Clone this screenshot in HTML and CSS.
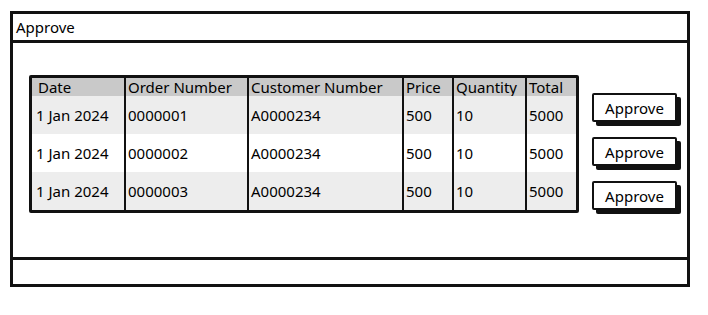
FILE: index.html
```html
<!DOCTYPE html>
<html lang="en">
<head>
    <meta charset="UTF-8">
    <title>Approve</title>
    <link rel="stylesheet" href="styles.css">
</head>
<body>
    <div class="window">
        <div class="title">Approve</div>
        <div class="main">
            <div class="grid">
                <div class="cell head first">Date</div>
                <div class="cell head">Order Number</div>
                <div class="cell head">Customer Number</div>
                <div class="cell head">Price</div>
                <div class="cell head">Quantity</div>
                <div class="cell head">Total</div>

                <div class="cell odd first">1 Jan 2024</div>
                <div class="cell odd">0000001</div>
                <div class="cell odd">A0000234</div>
                <div class="cell odd">500</div>
                <div class="cell odd">10</div>
                <div class="cell odd">5000</div>

                <div class="cell first">1 Jan 2024</div>
                <div class="cell">0000002</div>
                <div class="cell">A0000234</div>
                <div class="cell">500</div>
                <div class="cell">10</div>
                <div class="cell">5000</div>

                <div class="cell odd first">1 Jan 2024</div>
                <div class="cell odd">0000003</div>
                <div class="cell odd">A0000234</div>
                <div class="cell odd">500</div>
                <div class="cell odd">10</div>
                <div class="cell odd">5000</div>
            </div>
            <div class="buttons">
                <button class="btn">Approve</button>
                <button class="btn">Approve</button>
                <button class="btn">Approve</button>
            </div>
        </div>
        <div class="footer"></div>
    </div>
</body>
</html>
```

FILE: styles.css
```css
body{
    margin: 0;
    padding: 0;
    background: #fff;
    font-family: "Noto Sans", "Liberation Sans", sans-serif;
    font-size: 15px;
    color: #000;
}
.window{
    box-sizing: border-box;
    width: 680px;
    height: 276px;
    margin: 11px 0 0 10px;
    border: 3px solid #111;
    display: flex;
    flex-direction: column;
}
.title{
    height: 26px;
    line-height: 26px;
    padding-left: 3px;
    border-bottom: 3px solid #111;
}
.main{
    flex: 1;
    display: flex;
    align-items: flex-start;
    padding: 32px 0 0 16px;
}
.grid{
    display: grid;
    grid-template-columns: 92px 123px 155px 50px 73px 51px;
    grid-template-rows: 18px 38px 38px 38px;
    border: 3px solid #111;
    border-radius: 2px;
}
.cell{
    border-left: 2px solid #111;
    padding-left: 2px;
    display: flex;
    align-items: center;
    white-space: nowrap;
    overflow: hidden;
}
.cell.first{
    border-left: none;
    padding-left: 4px;
}
.head{
    background: #c9c9c9;
    align-items: flex-end;
    line-height: 18px;
}
.head.first{
    padding-left: 6px;
}
.odd{
    background: #ededed;
}
.buttons{
    display: flex;
    flex-direction: column;
    gap: 15px;
    margin: 18px 0 0 13px;
}
.btn{
    box-sizing: border-box;
    width: 85px;
    height: 29px;
    border: 2px solid #111;
    border-radius: 2px;
    background: #fff;
    box-shadow: 4px 4px 0 #111;
    font-family: inherit;
    font-size: 15px;
    color: #000;
    padding: 0;
}
.footer{
    height: 24px;
    border-top: 3px solid #111;
}
```
